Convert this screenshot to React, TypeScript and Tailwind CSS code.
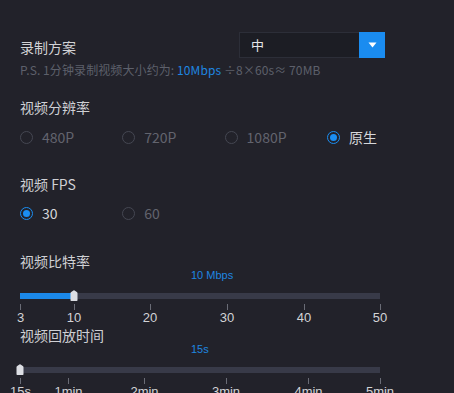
import React from "react";

const FONT = { fontFamily: '"Noto Sans CJK SC", "Microsoft YaHei", sans-serif' };
const NUM = { fontFamily: '"Liberation Sans", Arial, "Noto Sans CJK SC", sans-serif' };

function Radio({ label, checked }: { label: string; checked?: boolean }) {
  return (
    <div className="flex w-[102.3px] items-center gap-[9px] h-[20px]">
      <span
        className={
          "flex h-[13px] w-[13px] items-center justify-center rounded-full border " +
          (checked ? "border-[#1b8ef2]" : "border-[#454752]")
        }
      >
        {checked && <span className="h-[7px] w-[7px] rounded-full bg-[#1b8ef2]" />}
      </span>
      <span className={"text-[14px] leading-[20px] " + (checked ? "text-[#d6d7da]" : "text-[#62646e]")}>
        {label}
      </span>
    </div>
  );
}

function Thumb() {
  return (
    <svg width="8" height="11" viewBox="0 0 8 11" className="absolute top-[-3px]">
      <path d="M0.5 3.2 Q0.5 2.6 1.2 2.1 L3.4 0.4 Q4 0 4.6 0.4 L6.8 2.1 Q7.5 2.6 7.5 3.2 L7.5 10.3 Q7.5 11 6.8 11 L1.2 11 Q0.5 11 0.5 10.3 Z" fill="#dcdee3" />
    </svg>
  );
}

function Slider({
  title,
  value,
  fill,
  marks,
}: {
  title: string;
  value: string;
  fill: number;
  marks: { pos: number; label: string }[];
}) {
  return (
    <div className="flex w-[360px] flex-col">
      <div className="text-[14px] leading-[14px] text-[#cfd0d4]">{title}</div>
      <div className="pl-[171px] text-[11px] leading-[14px] text-[#1f86e0]" style={NUM}>
        {value}
      </div>
      <div className="relative mt-[11px] h-[6px] bg-[#383a48]">
        <div className="h-full bg-[#1b88e8]" style={{ width: fill }} />
        <div className="absolute top-0" style={{ left: fill - 4 }}>
          <Thumb />
        </div>
      </div>
      <div className="relative mt-[5px] h-[6px]">
        {marks.map((m) => (
          <span key={m.label} className="absolute top-0 h-[6px] w-px bg-[#6a6c76]" style={{ left: m.pos }} />
        ))}
      </div>
      <div className="relative mt-px h-[14px]">
        {marks.map((m) => (
          <span
            key={m.label}
            className="absolute top-0 -translate-x-1/2 whitespace-nowrap text-[13px] leading-[14px] text-[#d2d3d6]"
            style={{ left: m.pos + 0.5, ...NUM }}
          >
            {m.label}
          </span>
        ))}
      </div>
    </div>
  );
}

export default function App() {
  return (
    <div className="h-[393px] w-[454px] overflow-hidden bg-[#22222a] pl-[20px] pt-[32px]" style={FONT}>
      <div className="flex w-[365px] items-start justify-between">
        <div className="mt-[5px] text-[14px] leading-[20px] text-[#d2d3d6]">录制方案</div>
        <div className="flex h-[26px] w-[146px] border border-[#2c2e38] bg-[#1c1d24]">
          <div className="flex flex-1 items-center pl-[11px] text-[13px] text-[#e6e6e8]">中</div>
          <div className="flex w-[26px] items-center justify-center bg-[#1a8cf0] -my-px -mr-px">
            <svg width="9" height="6" viewBox="0 0 9 6">
              <path d="M0.5 0.5 L8.5 0.5 L4.5 5.5 Z" fill="#ffffff" />
            </svg>
          </div>
        </div>
      </div>
      <div className="mt-[4px] text-[12px] leading-[16px] tracking-[0.1px] text-[#5d606b]">
        P.S. 1分钟录制视频大小约为: <span className="text-[#1f86e0]">10Mbps</span> ÷8×60s≈ 70MB
      </div>

      <div className="mt-[19px] text-[14px] leading-[20px] text-[#cfd0d4]">视频分辨率</div>
      <div className="mt-[10px] flex">
        <Radio label="480P" />
        <Radio label="720P" />
        <Radio label="1080P" />
        <Radio label="原生" checked />
      </div>

      <div className="mt-[27px] text-[14px] leading-[20px] text-[#cfd0d4]">视频 FPS</div>
      <div className="mt-[9px] flex">
        <Radio label="30" checked />
        <Radio label="60" />
      </div>

      <div className="mt-[31px]">
        <Slider
          title="视频比特率"
          value="10 Mbps"
          fill={54}
          marks={[
            { pos: 0, label: "3" },
            { pos: 53.5, label: "10" },
            { pos: 129.5, label: "20" },
            { pos: 206.5, label: "30" },
            { pos: 283.5, label: "40" },
            { pos: 359.5, label: "50" },
          ]}
        />
      </div>
      <div className="mt-[3px]">
        <Slider
          title="视频回放时间"
          value="15s"
          fill={0}
          marks={[
            { pos: 0, label: "15s" },
            { pos: 48, label: "1min" },
            { pos: 124, label: "2min" },
            { pos: 205.5, label: "3min" },
            { pos: 288, label: "4min" },
            { pos: 359.5, label: "5min" },
          ]}
        />
      </div>
    </div>
  );
}
